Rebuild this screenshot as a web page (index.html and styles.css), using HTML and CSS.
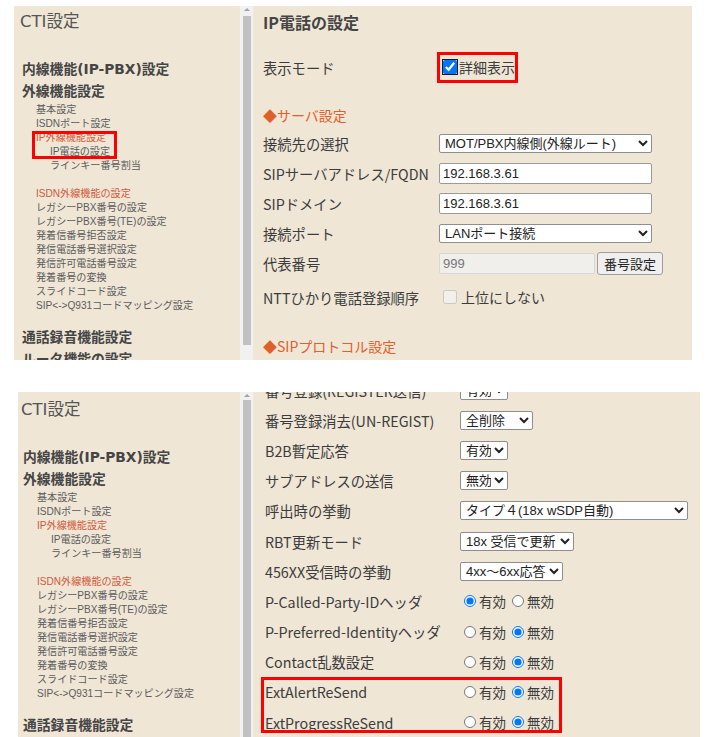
FILE: index.html
```html
<!DOCTYPE html>
<html lang="ja">
<head>
<meta charset="utf-8">
<title>IP電話の設定</title>
<link rel="stylesheet" href="styles.css">
</head>
<body>
<section class="shot shot-a">
  <nav class="side">
    <div class="cti">CTI設定</div>
    <div class="h1 h1-first">内線機能(IP-PBX)設定</div>
    <div class="h1">外線機能設定</div>
    <ul class="menu">
      <li>基本設定</li>
      <li>ISDNポート設定</li>
      <li class="red">IP外線機能設定</li>
      <li class="sub">IP電話の設定</li>
      <li class="sub">ラインキー番号割当</li>
      <li class="red gap">ISDN外線機能の設定</li>
      <li>レガシーPBX番号の設定</li>
      <li>レガシーPBX番号(TE)の設定</li>
      <li>発着信番号拒否設定</li>
      <li>発信電話番号選択設定</li>
      <li>発信許可電話番号設定</li>
      <li>発着番号の変換</li>
      <li>スライドコード設定</li>
      <li>SIP&lt;-&gt;Q931コードマッピング設定</li>
    </ul>
    <div class="h1 h1-rec">通話録音機能設定</div>
    <div class="h1">ルータ機能の設定</div>
  </nav>
  <div class="scrollbar"><span class="arrow"></span><span class="thumb thumb-a"></span></div>
  <main class="main main-a">
    <h1 class="title">IP電話の設定</h1>
    <div class="row row-mode">
      <span class="lbl">表示モード</span>
      <label class="chk"><input type="checkbox" checked>詳細表示</label>
    </div>
    <h2 class="sec sec-server">◆サーバ設定</h2>
    <div class="row">
      <span class="lbl">接続先の選択</span>
      <select class="sel w-wide"><option>MOT/PBX内線側(外線ルート)</option></select>
    </div>
    <div class="row">
      <span class="lbl">SIPサーバアドレス/FQDN</span>
      <input class="txt w-wide" type="text" value="192.168.3.61">
    </div>
    <div class="row">
      <span class="lbl">SIPドメイン</span>
      <input class="txt w-wide" type="text" value="192.168.3.61">
    </div>
    <div class="row">
      <span class="lbl">接続ポート</span>
      <select class="sel w-wide"><option>LANポート接続</option></select>
    </div>
    <div class="row">
      <span class="lbl">代表番号</span>
      <input class="txt w-rep" type="text" value="999" disabled>
      <button class="btn" type="button">番号設定</button>
    </div>
    <div class="row row-ntt">
      <span class="lbl">NTTひかり電話登録順序</span>
      <label class="chk dis"><input type="checkbox" disabled>上位にしない</label>
    </div>
    <h2 class="sec sec-sip">◆SIPプロトコル設定</h2>
  </main>
  <div class="mark mark-menu"></div>
  <div class="mark mark-mode"></div>
</section>

<section class="shot shot-b">
  <nav class="side side-b">
    <div class="cti cti-b">CTI設定</div>
    <div class="h1 h1-first">内線機能(IP-PBX)設定</div>
    <div class="h1">外線機能設定</div>
    <ul class="menu">
      <li>基本設定</li>
      <li>ISDNポート設定</li>
      <li class="red">IP外線機能設定</li>
      <li class="sub">IP電話の設定</li>
      <li class="sub">ラインキー番号割当</li>
      <li class="red gap">ISDN外線機能の設定</li>
      <li>レガシーPBX番号の設定</li>
      <li>レガシーPBX番号(TE)の設定</li>
      <li>発着信番号拒否設定</li>
      <li>発信電話番号選択設定</li>
      <li>発信許可電話番号設定</li>
      <li>発着番号の変換</li>
      <li>スライドコード設定</li>
      <li>SIP&lt;-&gt;Q931コードマッピング設定</li>
    </ul>
    <div class="h1 h1-rec">通話録音機能設定</div>
  </nav>
  <div class="scrollbar"><span class="arrow"></span><span class="thumb thumb-b"></span></div>
  <main class="main main-b">
    <div class="row2">
      <span class="lbl2">番号登録(REGISTER送信)</span>
      <select class="sel s-48"><option>有効</option></select>
    </div>
    <div class="row2">
      <span class="lbl2">番号登録消去(UN-REGIST)</span>
      <select class="sel s-73"><option>全削除</option></select>
    </div>
    <div class="row2">
      <span class="lbl2">B2B暫定応答</span>
      <select class="sel s-48"><option>有効</option></select>
    </div>
    <div class="row2">
      <span class="lbl2">サブアドレスの送信</span>
      <select class="sel s-48"><option>無効</option></select>
    </div>
    <div class="row2">
      <span class="lbl2">呼出時の挙動</span>
      <select class="sel s-228"><option>タイプ４(18x wSDP自動)</option></select>
    </div>
    <div class="row2">
      <span class="lbl2">RBT更新モード</span>
      <select class="sel s-114"><option>18x 受信で更新</option></select>
    </div>
    <div class="row2">
      <span class="lbl2">456XX受信時の挙動</span>
      <select class="sel s-103"><option>4xx～6xx応答</option></select>
    </div>
    <div class="row2">
      <span class="lbl2">P-Called-Party-IDヘッダ</span>
      <span class="radios"><label><input type="radio" name="r1" checked>有効</label><label><input type="radio" name="r1">無効</label></span>
    </div>
    <div class="row2">
      <span class="lbl2">P-Preferred-Identityヘッダ</span>
      <span class="radios"><label><input type="radio" name="r2">有効</label><label><input type="radio" name="r2" checked>無効</label></span>
    </div>
    <div class="row2">
      <span class="lbl2">Contact乱数設定</span>
      <span class="radios"><label><input type="radio" name="r3">有効</label><label><input type="radio" name="r3" checked>無効</label></span>
    </div>
    <div class="row2">
      <span class="lbl2">ExtAlertReSend</span>
      <span class="radios"><label><input type="radio" name="r4">有効</label><label><input type="radio" name="r4" checked>無効</label></span>
    </div>
    <div class="row2">
      <span class="lbl2">ExtProgressReSend</span>
      <span class="radios"><label><input type="radio" name="r5">有効</label><label><input type="radio" name="r5" checked>無効</label></span>
    </div>
  </main>
  <div class="mark mark-ext"></div>
</section>
</body>
</html>
```

FILE: styles.css
```css
* { box-sizing: border-box; }
body {
  margin: 0;
  background: #fff;
  font-family: "Noto Sans CJK JP", "Noto Sans", sans-serif;
  color: #3c3c3c;
}
.shot {
  position: relative;
  display: flex;
  background: #efe6d6;
  overflow: hidden;
}
.shot-a { margin: 6px 0 0 14px; width: 678px; height: 354px; }
.shot-b { margin: 32px 0 0 18px; width: 682px; height: 345px; }

/* sidebar */
.side {
  width: 226px;
  flex: none;
  padding-left: 6px;
  color: #4a4a4a;
}
.side-b { width: 222px; padding-left: 3px; }
.cti {
  margin-top: 6px;
  font-family: "DejaVu Sans", "Noto Sans CJK JP", sans-serif;
  font-size: 16.5px;
  line-height: 20px;
  color: #555;
}
.cti-b { margin-top: 8px; }
.h1 {
  font-family: "DejaVu Sans", "Noto Sans CJK JP", sans-serif;
  font-size: 13.8px;
  font-weight: bold;
  line-height: 22px;
  padding-left: 2px;
  color: #454545;
  white-space: nowrap;
}
.h1-first { margin-top: 26px; }
.h1-rec { margin-top: 13px; }
.menu {
  list-style: none;
  margin: 1px 0 0;
  padding: 0 0 0 16px;
  font-family: "Liberation Sans", "Noto Sans CJK JP", sans-serif;
  font-size: 10.1px;
  line-height: 14px;
  color: #5c5c5c;
}
.menu li { height: 14px; white-space: nowrap; }
.menu .red { color: #cf5a3c; }
.menu .sub { padding-left: 14px; }
.menu .gap { margin-top: 14px; }

/* scrollbar */
.scrollbar {
  position: relative;
  width: 13px;
  flex: none;
  background: #f1f1f1;
}
.arrow {
  position: absolute;
  left: 4px;
  top: 2px;
  width: 0;
  height: 0;
  border-left: 3px solid transparent;
  border-right: 3px solid transparent;
  border-bottom: 3px solid #a3a3a3;
}
.thumb {
  position: absolute;
  left: 3px;
  width: 8px;
  background: #c1c1c1;
}
.thumb-a { top: 10px; bottom: 15px; }
.thumb-b { top: 8px; bottom: 0; }

/* main top */
.main { flex: 1; }
.main-a { padding-left: 10px; }
.title {
  margin: 0;
  height: 32px;
  line-height: 32px;
  font-size: 16px;
  font-weight: bold;
  color: #454545;
}
.row {
  display: flex;
  align-items: center;
  height: 30px;
  font-size: 14.3px;
  color: #3c3c3c;
}
.lbl { width: 176px; flex: none; white-space: nowrap; }
.row-mode { margin-top: 14px; }
.row-ntt { height: 34px; padding-top: 4px; }
.sec {
  margin: 0;
  font-size: 14px;
  font-weight: normal;
  line-height: 20px;
  color: #e0602a;
}
.sec-server { margin-top: 23px; margin-bottom: 3px; }
.sec-sip { margin-top: 24px; }
.chk {
  display: inline-flex;
  align-items: center;
  font-size: 14px;
}
.chk input { margin: 0 2px 0 4px; width: 14px; height: 14px; }
.row-mode .chk input { outline: 1px solid #1b1b1b; outline-offset: 0; }
.chk.dis input { margin-right: 4px; }

.sel {
  height: 19px;
  font-family: "Liberation Sans", "Noto Sans CJK JP", sans-serif;
  font-size: 13px;
  color: #222;
  background: #fff;
  border: 1px solid #8e8e8e;
  border-radius: 2px;
  padding: 0 0 0 1px;
}
.txt {
  height: 21px;
  font-family: "Liberation Sans", "Noto Sans CJK JP", sans-serif;
  font-size: 13px;
  color: #222;
  background: #fff;
  border: 1px solid #9a9a9a;
  border-radius: 2px;
  padding: 1px 3px;
}
.txt:disabled { background: #f0efec; color: #777; border-color: #d8d8d8; }
.w-wide { width: 213px; }
.w-rep { width: 156px; }
.btn {
  margin-left: 2px;
  height: 23px;
  width: 66px;
  padding: 0;
  font-family: "Noto Sans CJK JP", sans-serif;
  font-size: 13px;
  color: #222;
  background: #efefef;
  border: 1px solid #9d9d9d;
  border-radius: 3px;
}

/* main bottom */
.main-b { padding-left: 12px; margin-top: -17px; }
.row2 {
  display: flex;
  align-items: center;
  height: 30.2px;
  font-size: 14.3px;
  color: #3c3c3c;
}
.lbl2 { width: 195px; flex: none; white-space: nowrap; }
.s-48 { width: 48px; }
.s-73 { width: 73px; }
.s-228 { width: 228px; }
.s-114 { width: 114px; }
.s-103 { width: 103px; }
.radios {
  display: flex;
  align-items: center;
  font-size: 13.5px;
}
.radios label { display: inline-flex; align-items: center; }
.radios input { margin: 0 3px 0 4px; width: 12px; height: 12px; }
.radios label + label input { margin-left: 6px; }

/* annotation boxes */
.mark {
  position: absolute;
  border: 3px solid #f00;
}
.mark-menu { left: 18px; top: 125px; width: 85px; height: 28px; }
.mark-mode { left: 423px; top: 46px; width: 81px; height: 31px; }
.mark-ext { left: 243px; top: 285px; width: 301px; height: 56px; }
```
